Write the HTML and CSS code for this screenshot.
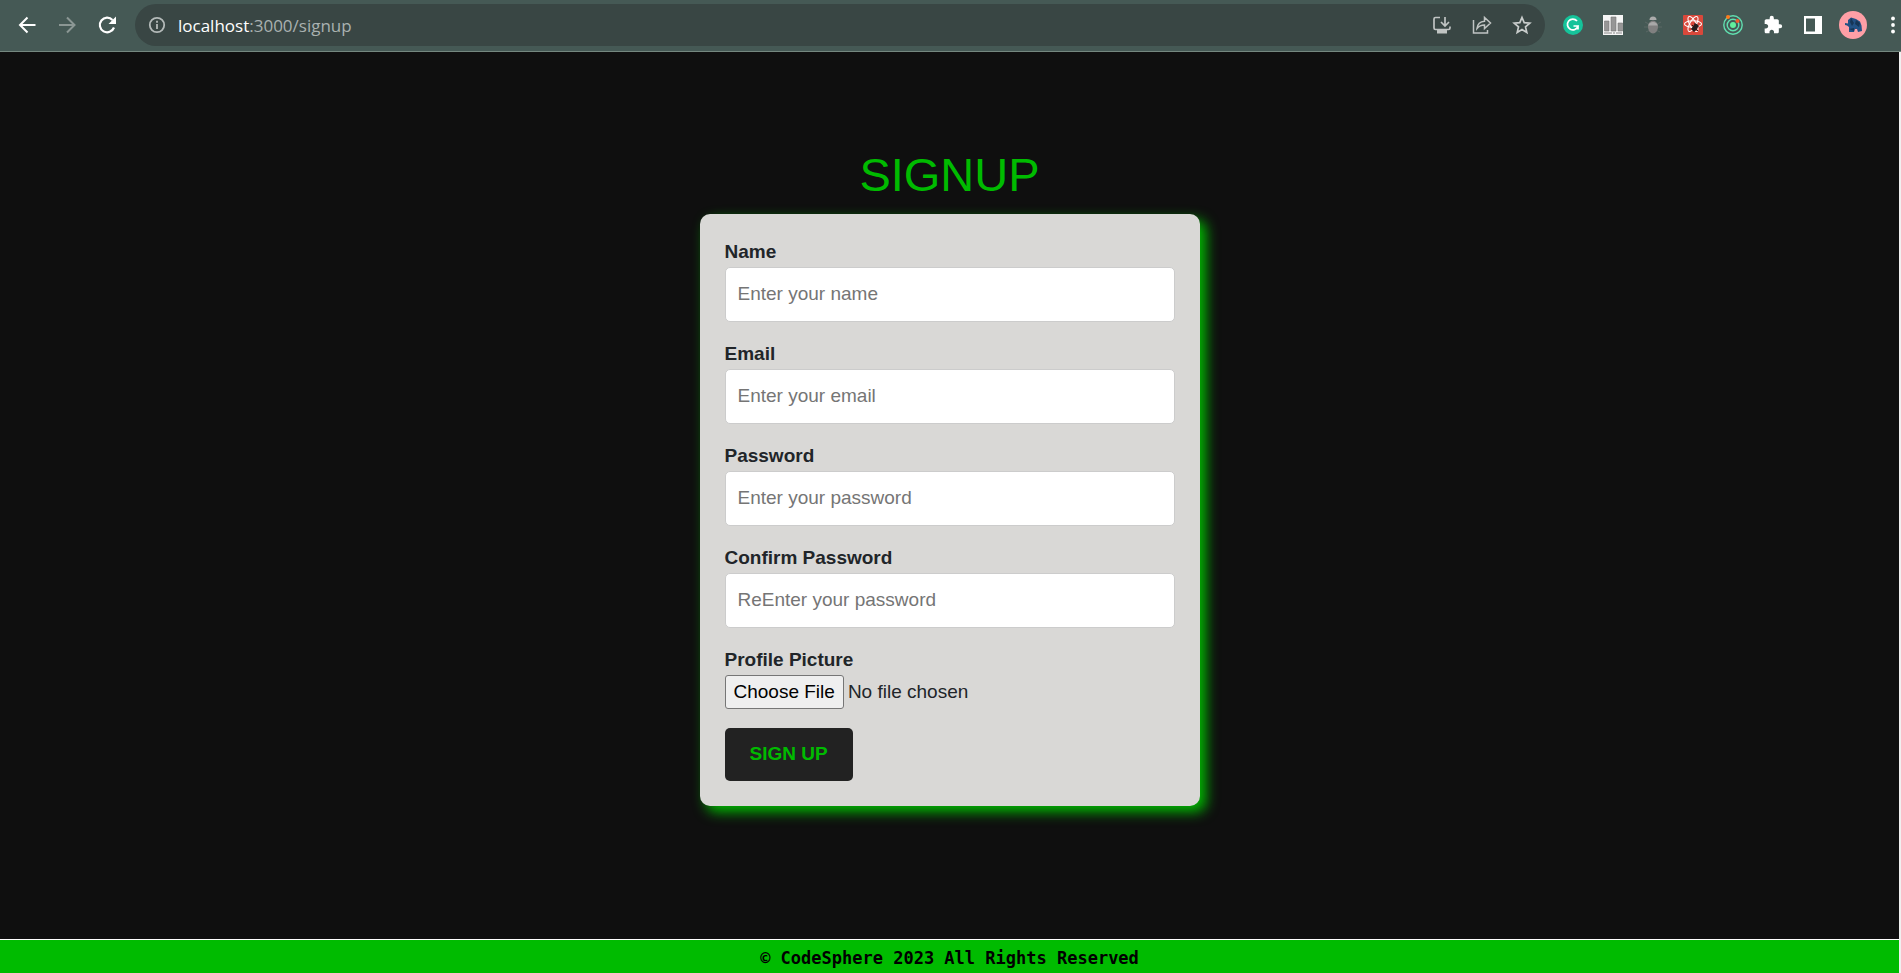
FILE: index.html
```html
<!DOCTYPE html>
<html lang="en">
<head>
<meta charset="utf-8">
<title>Sign up</title>
<link rel="stylesheet" href="styles.css">
</head>
<body>
<div class="window">
  <header class="toolbar">
    <div class="nav">
      <button class="icon-btn" type="button" aria-label="Back"><svg width="20" height="20" viewBox="0 0 20 20" fill="none" stroke="#fff" stroke-width="2"><path d="M18.500 10H3.500M10.500 2.500 3 10l7.500 7.500"/></svg></button>
      <button class="icon-btn" type="button" aria-label="Forward"><svg width="20" height="20" viewBox="0 0 20 20" fill="none" stroke="#8b9794" stroke-width="2"><path d="M2 10h15M10 2.500l7.500 7.500-7.500 7.500"/></svg></button>
      <button class="icon-btn" type="button" aria-label="Reload"><svg width="20" height="20" viewBox="0 0 20 20"><path d="M17 12.500A7.300 7.300 0 1 1 15.500 5" fill="none" stroke="#fff" stroke-width="2.200"/><path d="M19 1.500v7.500h-7.500z" fill="#fff"/></svg></button>
    </div>
    <div class="address">
      <svg class="info" width="18" height="18" viewBox="0 0 18 18" fill="none" stroke="#b4bab9" stroke-width="1.800"><circle cx="9" cy="9" r="7.200"/><path d="M9 8v5M9 4.800v2"/></svg>
      <a class="url" href="#"><span class="host">localhost</span>:3000/signup</a>
      <div class="page-actions">
        <button class="icon-btn" type="button" aria-label="Install"><svg width="20" height="20" viewBox="0 0 20 20" fill="none" stroke="#c0c4c3" stroke-width="1.700"><path d="M8 2.500H3.500a1.500 1.500 0 0 0-1.500 1.500v9a1.500 1.500 0 0 0 1.500 1.500h13a1.500 1.500 0 0 0 1.500-1.500v-1.500M13 2v8.500M9 7l4 4 4-4"/><path d="M5 15h10v3.500H5z" fill="#c0c4c3" stroke="none"/></svg></button>
        <button class="icon-btn" type="button" aria-label="Share"><svg width="20" height="20" viewBox="0 0 20 20" fill="none" stroke="#c0c4c3" stroke-width="1.500"><path d="M1.500 5v13h14v-3M5 13.500C5.500 9 8 6.500 12.500 6.200V2.500l6 5.500-6 5.500V10C9.500 10 7 11 5 13.500z"/></svg></button>
        <button class="icon-btn" type="button" aria-label="Bookmark"><svg width="20" height="20" viewBox="0 0 20 20" fill="none" stroke="#c9cdcc" stroke-width="1.700"><path d="M10 2.500l2.200 5.200 5.600.5-4.300 3.700 1.300 5.500-4.800-2.900-4.800 2.900 1.300-5.500-4.300-3.700 5.600-.5z"/></svg></button>
      </div>
    </div>
    <div class="extensions">
      <button class="icon-btn" type="button" aria-label="Grammar"><svg width="20" height="20" viewBox="0 0 20 20"><circle cx="10" cy="10" r="10" fill="#15c39a"/><path d="M14 6A5.400 5.400 0 1 0 15 11H10.500M15 11v3.500" fill="none" stroke="#fff" stroke-width="1.700"/></svg></button>
      <button class="icon-btn" type="button" aria-label="Charts"><svg width="20" height="20" viewBox="0 0 20 20"><path fill="#f5f5f5" d="M0 0h20v20H0z"/><path fill="#969696" stroke="#757575" stroke-width=".6" d="M1.500 6h4.500v10H1.500zM8 2h5v14H8zM15 8h4.500v8H15z"/><path stroke="#888" stroke-dasharray="8 1 2 1" d="M1 18h18"/></svg></button>
      <button class="icon-btn" type="button" aria-label="Debugger"><svg width="20" height="20" viewBox="0 0 20 20"><path d="M2 7l4 2M18 7l-4 2M1 12h18M3 17l4-2M17 17l-4-2" stroke="#5b6865"/><path d="M6.500 5a3.500 3.500 0 0 1 7 0z" fill="#aaa"/><ellipse cx="10" cy="12" rx="5" ry="6.500" fill="#808080"/><path d="M5.200 10.500a5 5 0 0 1 9.600 0z" fill="#a8a8a8"/></svg></button>
      <button class="icon-btn" type="button" aria-label="Component inspector"><svg width="20" height="20" viewBox="0 0 20 20"><rect width="20" height="20" rx="1" fill="#d9483b"/><g fill="none" stroke="#fff" stroke-width="1.100"><ellipse cx="10" cy="9" rx="8.500" ry="3.200"/><ellipse cx="10" cy="9" rx="8.500" ry="3.200" transform="rotate(60 10 9)"/><ellipse cx="10" cy="9" rx="8.500" ry="3.200" transform="rotate(120 10 9)"/></g><ellipse cx="12" cy="12.500" rx="2.400" ry="4" fill="#241c1c" transform="rotate(35 12 12.500)"/><path d="M9 10l6 6M8 14l8-3M12 8l-1 9" stroke="#241c1c"/></svg></button>
      <button class="icon-btn" type="button" aria-label="Orbit"><svg width="20" height="20" viewBox="0 0 20 20"><g fill="none" stroke="#61dfb0" stroke-width="1.400"><circle cx="10" cy="10" r="9.200"/><circle cx="10" cy="10" r="5.800"/></g><circle cx="10" cy="10" r="3" fill="#61ef9d"/><circle cx="5" cy="2" r="2" fill="#ff7a1a"/><circle cx="14.500" cy="6" r="2" fill="#f4572b"/></svg></button>
      <button class="icon-btn" type="button" aria-label="Extensions"><svg width="20" height="20" viewBox="0 0 24 24"><path d="M20.500 11H19V7c0-1.100-.9-2-2-2h-4V3.500a2.500 2.500 0 0 0-5 0V5H4c-1.100 0-2 .9-2 2v3.800h1.500c1.500 0 2.700 1.200 2.700 2.700S5 16.200 3.500 16.200H2V20c0 1.100.9 2 2 2h3.800v-1.500c0-1.500 1.200-2.700 2.700-2.700s2.700 1.200 2.700 2.700V22H17c1.100 0 2-.9 2-2v-4h1.500a2.500 2.500 0 0 0 0-5z" fill="#fff"/></svg></button>
      <button class="icon-btn" type="button" aria-label="Side panel"><svg width="20" height="20" viewBox="0 0 20 20"><path d="M1 1h18v18H1zM3 3.500v13h9v-13z" fill="#fff" fill-rule="evenodd"/></svg></button>
      <button class="icon-btn avatar" type="button" aria-label="Profile"><svg width="28" height="28" viewBox="0 0 28 28"><circle cx="14" cy="14" r="14" fill="#ff9fa6"/><path d="M6 14v-2l3 .5V9l3-2.500 5 1.500 4 2.500 1.500 4L23 20l-4 1-1-3h-2l-1 3h-5v-5l-2-1.500z" fill="#235184"/><path d="M12 7l3 5-2 3-2-4zM17 9l4 3-1 4-4-3zM10 18l5-1v3z" fill="#173556"/></svg></button>
      <button class="icon-btn" type="button" aria-label="Menu"><svg width="20" height="18" viewBox="-8 0 20 18" fill="#fff"><circle cx="2" cy="2.500" r="1.900"/><circle cx="2" cy="9" r="1.900"/><circle cx="2" cy="15.500" r="1.900"/></svg></button>
    </div>
  </header>
  <div class="page">
    <main class="content">
      <h1 class="title">SIGNUP</h1>
      <form class="card">
        <div class="field">
          <label class="label" for="name">Name</label>
          <input class="input" id="name" type="text" placeholder="Enter your name">
        </div>
        <div class="field">
          <label class="label" for="email">Email</label>
          <input class="input" id="email" type="email" placeholder="Enter your email">
        </div>
        <div class="field">
          <label class="label" for="password">Password</label>
          <input class="input" id="password" type="password" placeholder="Enter your password">
        </div>
        <div class="field">
          <label class="label" for="confirm">Confirm Password</label>
          <input class="input" id="confirm" type="password" placeholder="ReEnter your password">
        </div>
        <div class="field">
          <label class="label" for="picture">Profile Picture</label>
          <input class="file" id="picture" type="file">
        </div>
        <button class="submit" type="submit">SIGN UP</button>
      </form>
    </main>
    <footer class="footer">© CodeSphere 2023 All Rights Reserved</footer>
  </div>
</div>
</body>
</html>
```
FILE: styles.css
```css
* { box-sizing: border-box; }
body { margin: 0; font-family: "Liberation Sans", Arial, sans-serif; background: #f0f0f0; }
.window { display: flex; flex-direction: column; min-height: 100vh; }

.toolbar { display: flex; align-items: center; height: 52px; padding: 0 0 1px 17px; overflow: hidden; background: #455955; border-bottom: 1px solid #74877f; }
.nav, .page-actions, .extensions { display: flex; align-items: center; gap: 20px; }
.extensions { margin-right: -2px; }
.icon-btn { display: flex; flex: none; padding: 0; border: 0; background: none; }
.icon-btn svg, .info { display: block; flex: none; }
.address { display: flex; flex: 1; align-items: center; height: 42px; margin: 0 18px; padding: 0 13px; border-radius: 21px; background: #394644; }
.url { flex: 1; margin-left: 12px; color: #a9b1b0; font-family: "Open Sans", "Noto Sans", sans-serif; font-size: 17px; text-decoration: none; }
.host { color: #fff; }
.avatar { margin: 0 -4px; }

.page { display: flex; flex: 1; flex-direction: column; margin-right: 2px; background: #0f0f0f; }
.content { display: flex; flex: 1; flex-direction: column; align-items: center; justify-content: center; padding-bottom: 40px; }
.title { margin: 0 0 10px; color: #0b0; font-size: 47px; font-weight: 400; line-height: 58px; }
.card { width: 500px; max-width: 100%; padding: 25px; border-radius: 10px; background: #d9d8d6; box-shadow: 6px 6px 13px #0b0; }
.field { margin-bottom: 19px; }
.label { display: block; padding-bottom: 2px; color: #212529; font-size: 19px; font-weight: 700; line-height: 26px; }
.input { display: block; width: 100%; height: 55px; padding: 12px; border: 1px solid #ccc; border-radius: 5px; background: #fff; font: 19px "Liberation Sans", Arial, sans-serif; }
.input::placeholder { color: #757575; }
.file { display: block; width: 100%; color: #212529; font: 19px "Liberation Sans", Arial, sans-serif; }
.file::file-selector-button { height: 34px; padding: 0 8px; border: 1px solid #767676; border-radius: 3px; background: #efefef; color: #000; font: inherit; }
.submit { display: block; height: 53px; padding: 0 25px; border: 0; border-radius: 5px; background: #222; color: #0b0; font: 700 19px "Liberation Sans", Arial, sans-serif; }
.footer { height: 34px; padding-top: 3px; border-top: 1px solid #fff; background: #0b0; color: #000; font: 700 17px/30px "DejaVu Sans Mono", monospace; text-align: center; }
```
